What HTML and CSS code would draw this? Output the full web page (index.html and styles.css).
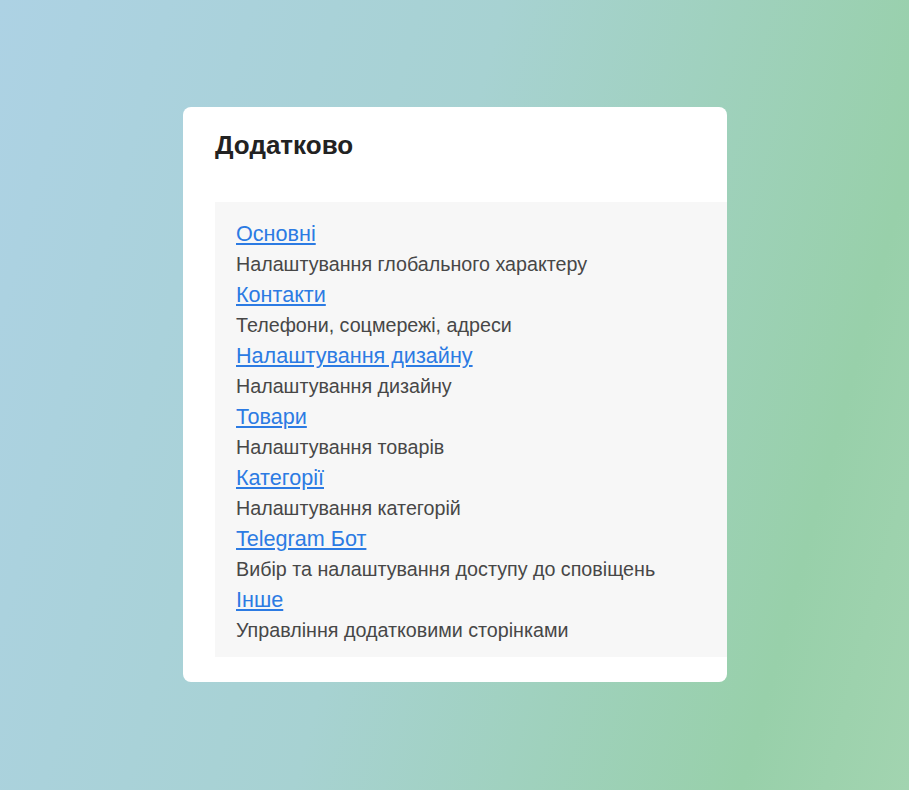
FILE: index.html
```html
<!DOCTYPE html>
<html lang="uk">
<head>
<meta charset="utf-8">
<title>Додатково</title>
<link rel="stylesheet" href="styles.css">
</head>
<body>
<div class="page">
  <div class="card">
    <h2 class="card-title">Додатково</h2>
    <div class="list">
      <a class="item-link" href="#">Основні</a>
      <div class="item-desc">Налаштування глобального характеру</div>
      <a class="item-link" href="#">Контакти</a>
      <div class="item-desc">Телефони, соцмережі, адреси</div>
      <a class="item-link" href="#">Налаштування дизайну</a>
      <div class="item-desc">Налаштування дизайну</div>
      <a class="item-link" href="#">Товари</a>
      <div class="item-desc">Налаштування товарів</div>
      <a class="item-link" href="#">Категорії</a>
      <div class="item-desc">Налаштування категорій</div>
      <a class="item-link" href="#">Telegram Бот</a>
      <div class="item-desc">Вибір та налаштування доступу до сповіщень</div>
      <a class="item-link" href="#">Інше</a>
      <div class="item-desc">Управління додатковими сторінками</div>
    </div>
  </div>
</div>
</body>
</html>
```
FILE: styles.css
```css
html, body {
  margin: 0;
  padding: 0;
  height: 100%;
}
body {
  font-family: "Liberation Sans", Arial, sans-serif;
  background: linear-gradient(105deg, #add2e4 0%, #a7d2d2 45%, #98d0aa 85%, #a2d4b0 100%);
}
.page {
  padding-top: 107px;
  padding-left: 183px;
}
.card {
  width: 544px;
  box-sizing: border-box;
  background: #fff;
  border-radius: 8px;
  padding: 22px 0 25px 32px;
}
.card-title {
  margin: 0;
  font-size: 26px;
  font-weight: bold;
  color: #222;
  line-height: 32px;
  height: 73px;
}
.list {
  background: #f7f7f7;
  padding: 16px 0 12px 21px;
  display: flex;
  flex-direction: column;
  align-items: flex-start;
}
.item-link {
  font-size: 21.6px;
  line-height: 31px;
  color: #2c7be3;
  text-decoration: underline;
}
.item-desc {
  font-size: 19.7px;
  line-height: 30px;
  color: #474747;
}
```
